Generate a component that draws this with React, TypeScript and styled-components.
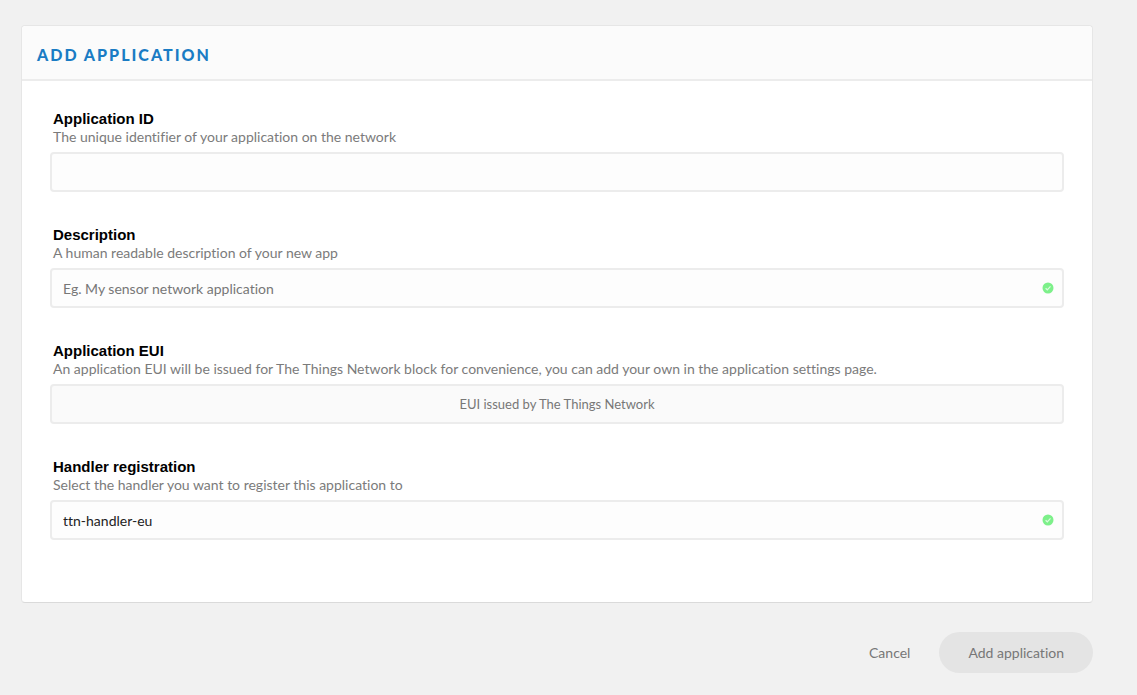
import React from 'react';
import styled, { createGlobalStyle, css } from 'styled-components';

const GlobalStyle = createGlobalStyle`
  * { box-sizing: border-box; }
  body { margin: 0; min-height: 100vh; background: #f1f1f1; font-family: Lato, sans-serif; font-size: 14px; color: #7b7b7b; font-variant-ligatures: none; }
`;

const Page = styled.main`
  padding: 25px 44px 22px 21px;
`;

const Panel = styled.section`
  background: #fff;
  border: 1px solid #e6e6e6;
  border-bottom-color: #dadada;
  border-radius: 4px;
`;

const PanelHeader = styled.header`
  padding: 17px 15px 12px;
  background: #fbfbfb;
  border-bottom: 2px solid #ececec;
  border-radius: 4px 4px 0 0;
`;

const Title = styled.h1`
  margin: 0;
  font-size: 16px;
  line-height: 24px;
  font-weight: 900;
  letter-spacing: 2px;
  text-transform: uppercase;
  color: #1a7cc4;
`;

const Fields = styled.div`
  display: flex;
  flex-direction: column;
  gap: 32px;
  padding: 27px 28px 62px;
`;

const Field = styled.div`
  display: flex;
  flex-direction: column;
`;

const Label = styled.label`
  padding-left: 3px;
  font: bold 15px/22px "Liberation Sans", sans-serif;
  color: #000;
`;

const Hint = styled.p`
  margin: 0 0 8px;
  padding-left: 3px;
  line-height: 14px;
`;

const InputWrap = styled.div`
  display: flex;
  align-items: center;
  position: relative;
`;

const Input = styled.input<{ $muted?: boolean }>`
  width: 100%;
  height: 40px;
  padding: 0 36px 0 11px;
  border: 2px solid #ececec;
  border-radius: 4px;
  background: #fdfdfd;
  font: 14px Lato, sans-serif;
  font-variant-ligatures: none;
  color: #222;
  &::placeholder { color: #777; opacity: 1; }
  ${p => p.$muted && css`
    padding: 0 11px;
    background: #fafafa;
    color: #777;
    font-size: 13px;
    text-align: center;
  `}
`;

const Check = styled.svg`
  position: absolute;
  right: 10px;
  width: 12px;
  height: 12px;
`;

const Actions = styled.footer`
  display: flex;
  justify-content: flex-end;
  padding-top: 29px;
`;

const Button = styled.button<{ $filled?: boolean }>`
  height: 41px;
  padding: 0 29px;
  border: 0;
  border-radius: 21px;
  background: ${p => (p.$filled ? '#e4e4e4' : 'transparent')};
  font: 14px Lato, sans-serif;
  font-variant-ligatures: none;
  color: #777;
`;

interface FieldProps {
  id: string;
  label: string;
  hint: string;
  value?: string;
  placeholder?: string;
  valid?: boolean;
  readOnly?: boolean;
}

function TextField({ id, label, hint, value, placeholder, valid, readOnly }: FieldProps) {
  return (
    <Field>
      <Label htmlFor={id}>{label}</Label>
      <Hint id={`${id}-hint`}>{hint}</Hint>
      <InputWrap>
        <Input id={id} aria-describedby={`${id}-hint`} defaultValue={value} placeholder={placeholder} readOnly={readOnly} $muted={readOnly} />
        {valid && (
          <Check viewBox="0 0 12 12" aria-hidden="true">
            <circle cx="6" cy="6" r="5.5" fill="#7df08a" />
            <path d="M3.6 6.2 5.3 7.8 8.5 4.4" fill="none" stroke="#d9fbdc" strokeWidth="1.2" />
          </Check>
        )}
      </InputWrap>
    </Field>
  );
}

export default function App() {
  return (
    <Page>
      <GlobalStyle />
      <form onSubmit={e => e.preventDefault()}>
        <Panel>
          <PanelHeader><Title>Add application</Title></PanelHeader>
          <Fields>
            <TextField id="app-id" label="Application ID" hint="The unique identifier of your application on the network" />
            <TextField id="description" label="Description" hint="A human readable description of your new app" placeholder="Eg. My sensor network application" valid />
            <TextField id="eui" label="Application EUI" hint="An application EUI will be issued for The Things Network block for convenience, you can add your own in the application settings page." value="EUI issued by The Things Network" readOnly />
            <TextField id="handler" label="Handler registration" hint="Select the handler you want to register this application to" value="ttn-handler-eu" valid />
          </Fields>
        </Panel>
        <Actions>
          <Button type="button">Cancel</Button>
          <Button type="submit" $filled>Add application</Button>
        </Actions>
      </form>
    </Page>
  );
}
